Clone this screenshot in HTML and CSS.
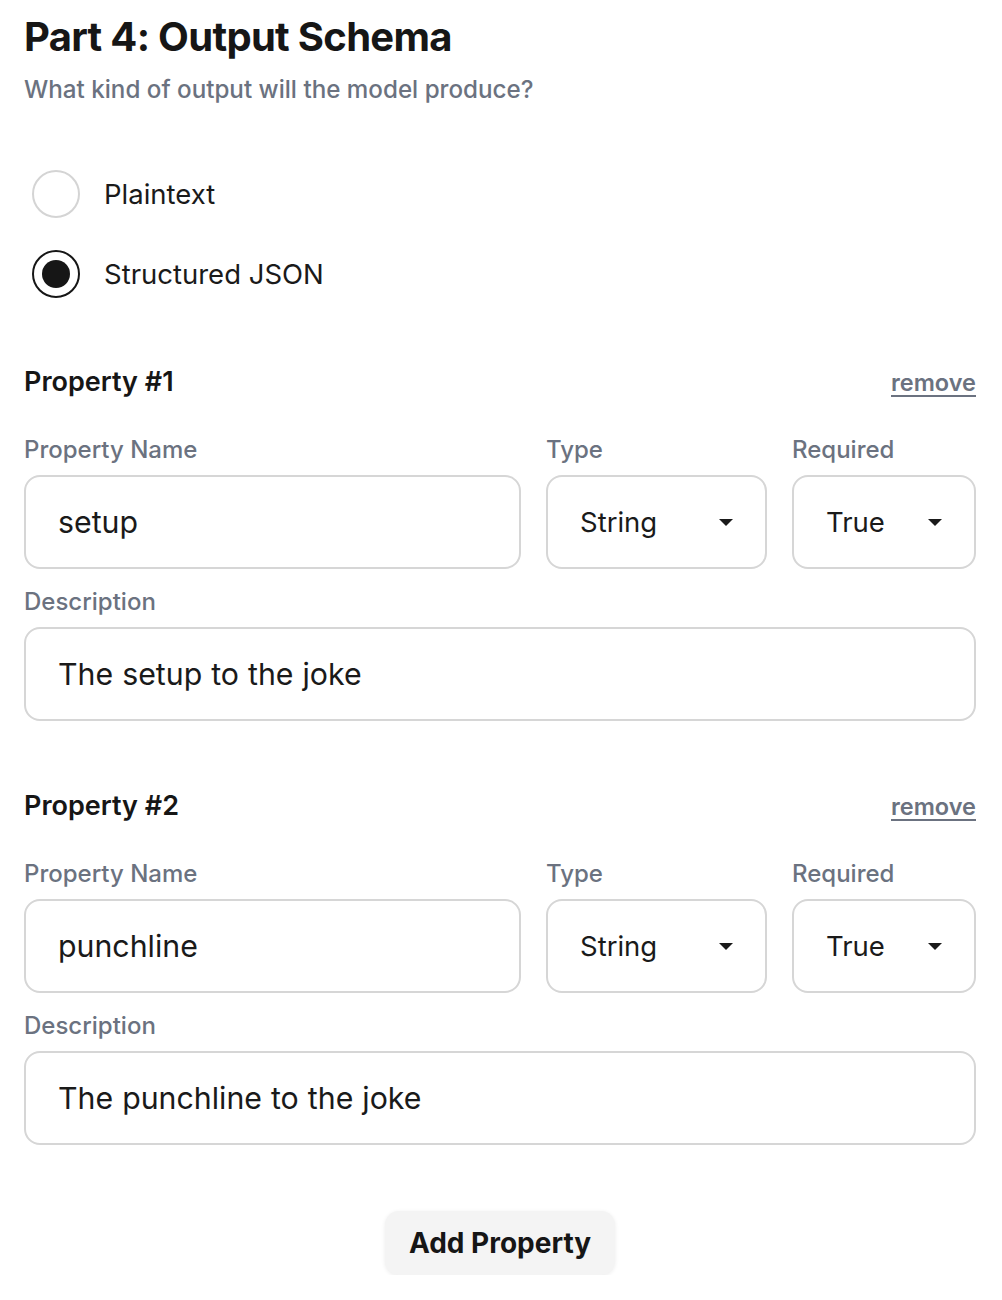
FILE: index.html
```html
<!DOCTYPE html>
<html>
<head>
<meta charset="utf-8">
<link rel="stylesheet" href="styles.css">
</head>
<body>
<main class="page">
  <h1 class="title">Part 4: Output Schema</h1>
  <p class="subtitle">What kind of output will the model produce?</p>

  <div class="radios">
    <label class="radio"><span class="dot"></span><span class="radio-label">Plaintext</span></label>
    <label class="radio checked"><span class="dot"></span><span class="radio-label">Structured JSON</span></label>
  </div>

  <section class="prop">
    <div class="prop-head"><h2>Property #1</h2><a class="remove">remove</a></div>
    <div class="row">
      <div class="field"><div class="label">Property Name</div><div class="box">setup</div></div>
      <div class="field"><div class="label">Type</div><div class="box select">String<span class="caret"></span></div></div>
      <div class="field"><div class="label">Required</div><div class="box select">True<span class="caret"></span></div></div>
    </div>
    <div class="field desc"><div class="label">Description</div><div class="box">The setup to the joke</div></div>
  </section>

  <section class="prop">
    <div class="prop-head"><h2>Property #2</h2><a class="remove">remove</a></div>
    <div class="row">
      <div class="field"><div class="label">Property Name</div><div class="box">punchline</div></div>
      <div class="field"><div class="label">Type</div><div class="box select">String<span class="caret"></span></div></div>
      <div class="field"><div class="label">Required</div><div class="box select">True<span class="caret"></span></div></div>
    </div>
    <div class="field desc"><div class="label">Description</div><div class="box">The punchline to the joke</div></div>
  </section>

  <div class="actions"><button class="add">Add Property</button></div>
</main>
</body>
</html>
```

FILE: styles.css
```css
* { box-sizing: border-box; }
html, body { margin: 0; padding: 0; background: #fff; }
body { font-family: Inter, "Noto Sans", sans-serif; color: #1a1a1a; }
.page { padding: 13px 26px 0 24px; }
.title { margin: 0; font-size: 40px; line-height: 48px; font-weight: 700; letter-spacing: -0.7px; color: #161616; }
.subtitle { margin: 14px 0 0; font-size: 24.2px; line-height: 30px; color: #6b7280; font-weight: 500; }
.radios { margin-top: 65px; display: flex; flex-direction: column; gap: 32px; padding-left: 8px; }
.radio { display: flex; align-items: center; gap: 24px; height: 48px; }
.dot { width: 48px; height: 48px; border-radius: 50%; border: 2px solid #d4d4d4; display: flex; align-items: center; justify-content: center; flex: none; }
.checked .dot { border: 2.5px solid #161616; }
.checked .dot::after { content: ""; width: 28px; height: 28px; border-radius: 50%; background: #161616; }
.radio-label { font-size: 27.5px; line-height: 34px; color: #1a1a1a; }
.prop { margin-top: 67px; }
.prop + .prop { margin-top: 68px; }
.prop-head { display: flex; justify-content: space-between; align-items: center; height: 34px; }
.prop-head h2 { margin: 0; font-size: 27px; font-weight: 600; line-height: 34px; color: #161616; }
.remove { font-size: 23.5px; font-weight: 600; color: #6b7280; text-decoration: underline; text-underline-offset: 4px; }
.row { margin-top: 37px; display: grid; grid-template-columns: 497px 221px 1fr; gap: 25px; }
.label { font-size: 24px; line-height: 28px; font-weight: 500; color: #6b7280; margin-bottom: 11px; }
.box { height: 94px; border: 2px solid #d6d6d6; border-radius: 16px; padding: 0 32px 0 32px; display: flex; align-items: center; font-size: 30.3px; word-spacing: 0.5px; color: #1a1a1a; }
.select { justify-content: space-between; font-size: 27.5px; }
.caret { width: 0; height: 0; border-left: 7px solid transparent; border-right: 7px solid transparent; border-top: 7px solid #1a1a1a; }
.desc { margin-top: 19px; }
.actions { margin-top: 66px; display: flex; justify-content: center; }
.add { width: 230px; height: 64px; border: none; border-radius: 14px; background: #f4f4f4; box-shadow: 0 1px 4px rgba(0,0,0,0.08); font-family: Inter, sans-serif; font-size: 28px; font-weight: 700; color: #161616; }
```
